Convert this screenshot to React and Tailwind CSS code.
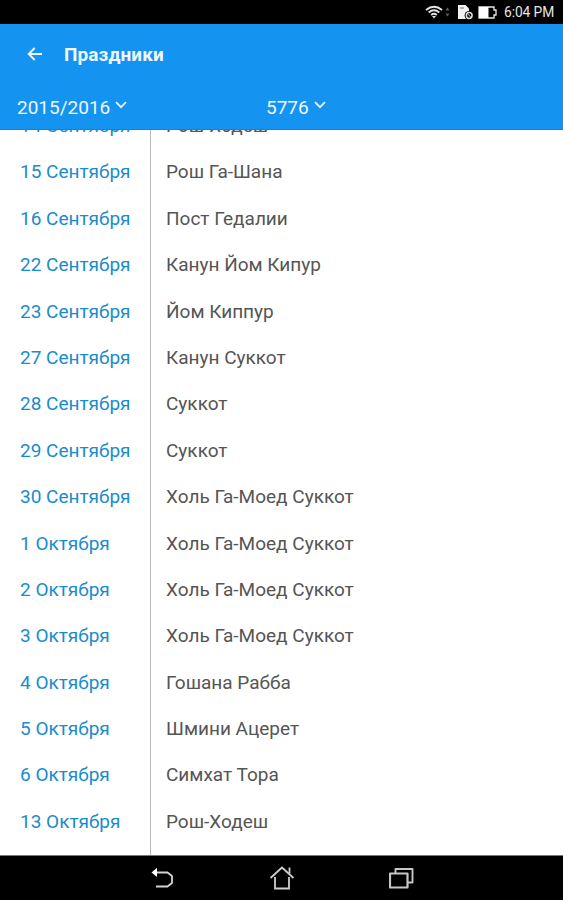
const holidays = [
  { date: "14 Сентября", name: "Рош-Ходеш" },
  { date: "15 Сентября", name: "Рош Га-Шана" },
  { date: "16 Сентября", name: "Пост Гедалии" },
  { date: "22 Сентября", name: "Канун Йом Кипур" },
  { date: "23 Сентября", name: "Йом Киппур" },
  { date: "27 Сентября", name: "Канун Суккот" },
  { date: "28 Сентября", name: "Суккот" },
  { date: "29 Сентября", name: "Суккот" },
  { date: "30 Сентября", name: "Холь Га-Моед Суккот" },
  { date: "1 Октября", name: "Холь Га-Моед Суккот" },
  { date: "2 Октября", name: "Холь Га-Моед Суккот" },
  { date: "3 Октября", name: "Холь Га-Моед Суккот" },
  { date: "4 Октября", name: "Гошана Рабба" },
  { date: "5 Октября", name: "Шмини Ацерет" },
  { date: "6 Октября", name: "Симхат Тора" },
  { date: "13 Октября", name: "Рош-Ходеш" },
];

function StatusBar() {
  return (
    <div className="flex h-6 shrink-0 items-center justify-end bg-black pr-2 text-[#e6e6e6]">
      <svg width="18" height="14" viewBox="0 0 18 14" fill="none" stroke="#e4e4e4" strokeWidth="1.8">
        <path d="M1 5 Q9 -1.5 17 5" />
        <path d="M3.7 7.5 Q9 3 14.3 7.5" />
        <path d="M6.2 10 Q9 7.6 11.8 10" />
        <path d="M7 11 L9 13.5 L11 11 Z" fill="#e4e4e4" stroke="none" />
      </svg>
      <svg className="ml-0.5" width="5" height="12" viewBox="0 0 5 12" fill="#606060">
        <path d="M2.5 1.5 L4.5 4.5 H0.5 Z M0.5 7.5 H4.5 L2.5 10.5 Z" />
      </svg>
      <svg className="ml-[7px]" width="17" height="16" viewBox="0 0 17 16">
        <path d="M1 1 H8.5 L12 4.5 V15 H1 Z" fill="#f2f2f2" />
        <path d="M3 4 H7" stroke="#777" strokeWidth="1" />
        <circle cx="12.2" cy="11.5" r="4.6" fill="#000" />
        <circle cx="12.2" cy="11.5" r="2.9" fill="none" stroke="#ddd" strokeWidth="1.5" />
        <path d="M10.4 9.7 L14 13.3" stroke="#ddd" strokeWidth="1" />
      </svg>
      <svg className="ml-1" width="19" height="13" viewBox="0 0 19 13">
        <path d="M1 1 H16 V4 H18 V9 H16 V12 H1 Z" fill="none" stroke="#e8e8e8" strokeWidth="1.3" />
        <path d="M1 1 H10.5 V12 H1 Z" fill="#fff" />
      </svg>
      <span className="ml-[7px] w-[51px] pt-px text-[13.8px] leading-[23px] tracking-[-0.1px] whitespace-nowrap">
        6:04 PM
      </span>
    </div>
  );
}

function Chevron() {
  return (
    <svg width="12" height="8" viewBox="0 0 12 8" fill="none" stroke="#e3f4ff" strokeWidth="1.8">
      <path d="M1 1.2 L6 6.2 L11 1.2" />
    </svg>
  );
}

function YearButton({ label, className }) {
  return (
    <button className={className}>
      <span className="mr-[5px]">{label}</span>
      <span className="pb-1.5">
        <Chevron />
      </span>
    </button>
  );
}

function Header() {
  return (
    <header className="z-10 h-[106px] shrink-0 border-b border-[#1780cf] bg-[#1593f0] text-[#edf8ff]">
      <div className="flex h-[60px] items-center pl-[27px]">
        <button aria-label="Назад">
          <svg width="16" height="14" viewBox="0 0 16 14" fill="none" stroke="#edf8ff" strokeWidth="1.9">
            <path d="M15 7 H2 M7.7 1 L1.7 7 L7.7 13" />
          </svg>
        </button>
        <h1 className="ml-[21px] pt-0.5 text-[19px] font-bold tracking-[0.1px]">Праздники</h1>
      </div>
      <div className="flex h-[45px] items-center pt-[3px] text-[19px]">
        <YearButton label="2015/2016" className="flex w-[249px] items-center pl-[17px]" />
        <YearButton label="5776" className="flex items-center pl-[17px]" />
      </div>
    </header>
  );
}

function NavBar() {
  return (
    <div className="flex h-[45px] shrink-0 items-center border-t border-[#777] bg-black pl-[151px]">
      <svg width="23" height="22" viewBox="0 0 23 22" fill="none" stroke="#d4d4d4" strokeWidth="1.8">
        <path d="M5 5.5 H16.5 L21 9 V16 L16.5 19.5 H5" strokeLinejoin="round" />
        <path d="M0.5 5.5 L6 0.8 V10 Z" fill="#fff" stroke="none" />
      </svg>
      <svg className="ml-[95px]" width="26" height="24" viewBox="0 0 26 24" fill="none" stroke="#cfcfcf" strokeWidth="1.8">
        <path d="M1.5 12 L13 1.5 L24.5 12" />
        <path d="M6 11 V22.5 H20 V11" />
        <path d="M20.5 7.5 V1.5" />
      </svg>
      <svg className="ml-[94px]" width="25" height="22" viewBox="0 0 25 22" fill="none" stroke="#c6c6c6" strokeWidth="1.9">
        <path d="M1 6.5 H18.5 V20.5 H1 Z" strokeWidth="2.2" strokeLinejoin="round" />
        <path d="M6.5 6 V2 H23.5 V15.5 H19" strokeLinejoin="round" />
      </svg>
    </div>
  );
}

export default function App() {
  return (
    <div className="flex h-[900px] w-[563px] flex-col overflow-hidden bg-white font-['Roboto',sans-serif]">
      <StatusBar />
      <Header />
      {/* the list is scrolled a little, its first row sits half under the header */}
      <main className="flex min-h-0 flex-1 overflow-hidden text-[19px] leading-[46.4px] whitespace-nowrap">
        <div className="w-[151px] shrink-0 border-r border-[#b9b9b9] pl-5 text-[#198ccd]">
          <ul className="-mt-[27px]">
            {holidays.map((h) => (
              <li key={h.date} className="h-[46.4px]">
                {h.date}
              </li>
            ))}
          </ul>
        </div>
        <ul className="-mt-[27px] pl-[15px] text-[#555]">
          {holidays.map((h) => (
            <li key={h.date} className="h-[46.4px]">
              {h.name}
            </li>
          ))}
        </ul>
      </main>
      <NavBar />
    </div>
  );
}
